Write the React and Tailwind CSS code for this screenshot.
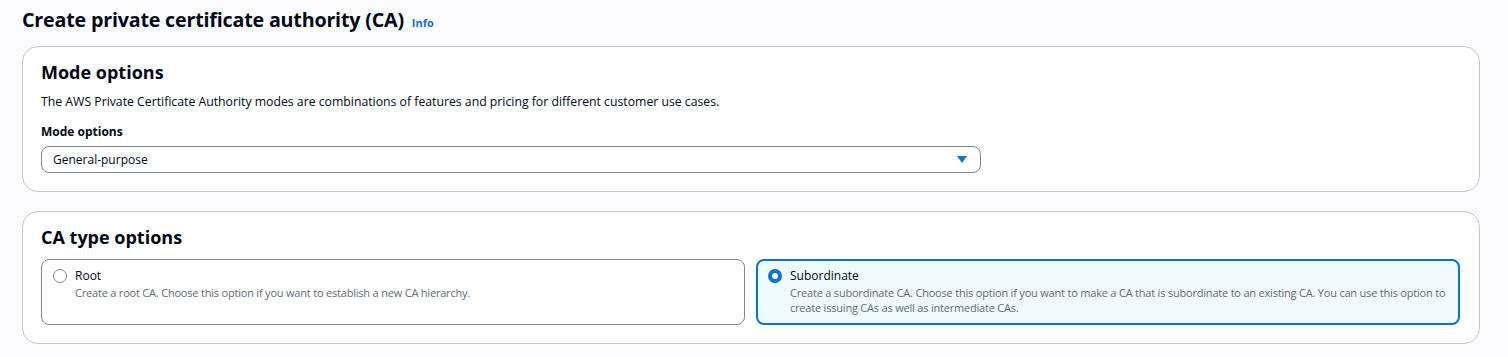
export default function App() {
  return (
    <div className="min-h-[357px] w-full bg-[#fbfbfd] pl-[22px] pr-[28px] pt-[5px] text-[#000716]" style={{ fontFamily: '"Open Sans", "Noto Sans", sans-serif' }}>
      <div className="flex items-baseline gap-[8px]">
        <h1 className="text-[19.7px] font-bold leading-[30px] tracking-[-0.2px]">Create private certificate authority (CA)</h1>
        <span className="text-[11px] font-bold text-[#0972d3]">Info</span>
      </div>
      <div className="mt-[11px] rounded-[16px] border border-[#c6c6cd] bg-white pl-[18px] pr-[19px] pb-[18px] pt-[12px]">
        <h2 className="text-[18px] font-bold leading-[26px]">Mode options</h2>
        <p className="mt-[8px] text-[12.25px] leading-[18px]">The AWS Private Certificate Authority modes are combinations of features and pricing for different customer use cases.</p>
        <div className="mt-[13px] text-[12px] font-bold leading-[16px]">Mode options</div>
        <div className="mt-[6px] flex h-[27px] w-[940px] items-center justify-between rounded-[8px] border border-[#7d8998] bg-white pl-[11px] pr-[13px]">
          <span className="text-[12px] leading-[18px]">General-purpose</span>
          <svg width="10" height="7" viewBox="0 0 10 7"><path d="M0 0h10L5 7z" fill="#0972d3" /></svg>
        </div>
      </div>
      <div className="mt-[19px] rounded-[16px] border border-[#c6c6cd] bg-white pl-[18px] pr-[19px] pb-[18px] pt-[12px]">
        <h2 className="text-[18px] font-bold leading-[26px]">CA type options</h2>
        <div className="mt-[9px] grid grid-cols-2 gap-[11px]">
          <div className="flex h-[66px] gap-[8px] rounded-[8px] border border-[#7d8998] bg-white px-[11px] pt-[7px]">
            <div className="mt-[2px] h-[14px] w-[14px] shrink-0 rounded-full border-[1.5px] border-[#7d8998] bg-white" />
            <div>
              <div className="text-[12px] leading-[18px]">Root</div>
              <div className="text-[11px] leading-[15px] tracking-[-0.2px] text-[#5f6b7a]">Create a root CA. Choose this option if you want to establish a new CA hierarchy.</div>
            </div>
          </div>
          <div className="flex h-[66px] gap-[8px] rounded-[8px] border-2 border-[#0972d3] bg-[#f0fbff] px-[10px] pt-[6px]">
            <div className="mt-[2px] h-[14px] w-[14px] shrink-0 rounded-full border-[4px] border-[#0972d3] bg-white" />
            <div>
              <div className="text-[12px] leading-[18px]">Subordinate</div>
              <div className="text-[11px] leading-[15px] tracking-[-0.2px] text-[#5f6b7a]">Create a subordinate CA. Choose this option if you want to make a CA that is subordinate to an existing CA. You can use this option to create issuing CAs as well as intermediate CAs.</div>
            </div>
          </div>
        </div>
      </div>
    </div>
  );
}
